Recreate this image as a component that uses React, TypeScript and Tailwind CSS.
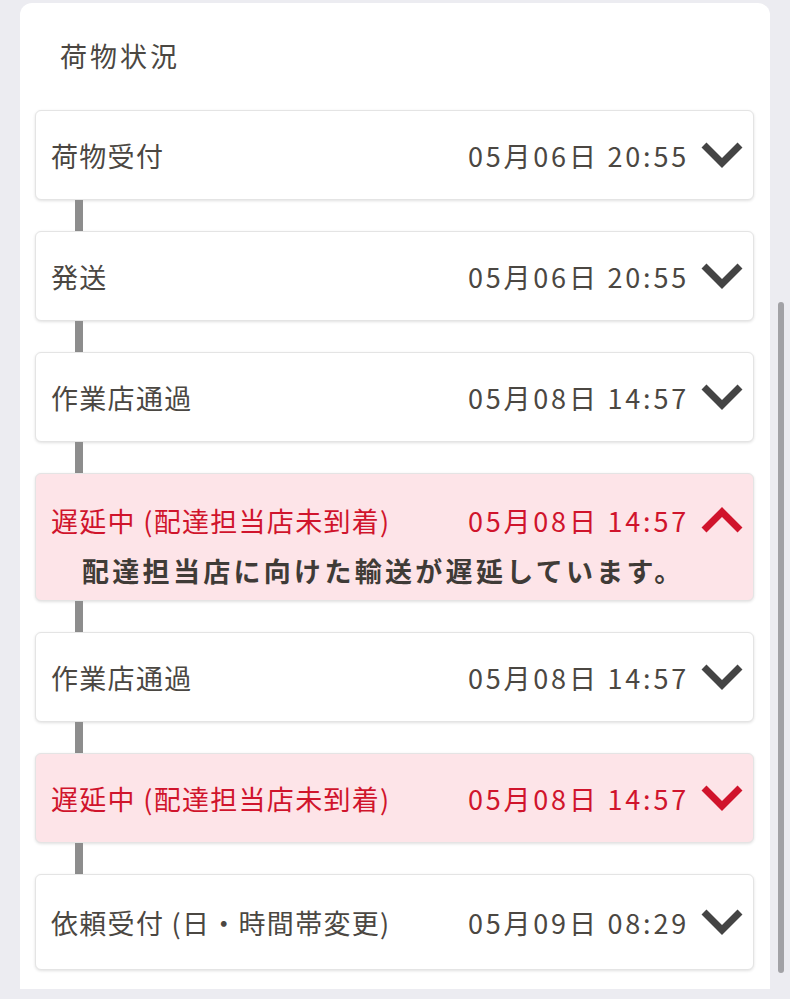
import React from 'react';

type Step = {
  label: string;
  date: string;
  delayed?: boolean;
  open?: boolean;
  detail?: string;
};

const steps: Step[] = [
  { label: '荷物受付', date: '05月06日 20:55' },
  { label: '発送', date: '05月06日 20:55' },
  { label: '作業店通過', date: '05月08日 14:57' },
  {
    label: '遅延中 (配達担当店未到着)',
    date: '05月08日 14:57',
    delayed: true,
    open: true,
    detail: '配達担当店に向けた輸送が遅延しています。',
  },
  { label: '作業店通過', date: '05月08日 14:57' },
  { label: '遅延中 (配達担当店未到着)', date: '05月08日 14:57', delayed: true },
  { label: '依頼受付 (日・時間帯変更)', date: '05月09日 08:29' },
];

function Chevron({ up, className }: { up?: boolean; className?: string }) {
  return (
    <svg viewBox="0 0 42 26" className={className} fill="none" stroke="currentColor" strokeWidth="7" strokeLinecap="butt" strokeLinejoin="miter">
      {up ? <path d="M3 23 L21 5 L39 23" /> : <path d="M3 3 L21 21 L39 3" />}
    </svg>
  );
}

export default function App() {
  return (
    <div
      className="relative h-[999px] w-[790px] overflow-hidden bg-[#ececf1] pt-[3px]"
      style={{ fontFamily: '"Noto Sans CJK JP", "Noto Sans", sans-serif' }}
    >
      <div className="ml-[20px] h-[986px] w-[750px] rounded-t-[12px] bg-white">
        {/* ── title ── */}
        <h2 className="pl-[40px] pt-[33px] text-[27px] leading-[40px] tracking-[3px] text-[#4b4742]">荷物状況</h2>

        {/* ── timeline ── */}
        <div className="mt-[34px] pl-[15px] pr-[16px]">
          {steps.map((s, i) => {
            const last = i === steps.length - 1;
            const tone = s.delayed ? 'text-[#d0142c]' : 'text-[#4b4742]';
            return (
              <div key={i}>
                {i > 0 && <div className="ml-[40px] h-[31px] w-[8px] bg-[#8d8d8d]" />}
                <div
                  className={
                    'rounded-[6px] border border-[#e4e4e4] shadow-[0_1px_3px_rgba(0,0,0,0.12)] ' +
                    (s.delayed ? 'bg-[#fde4e8]' : 'bg-white')
                  }
                >
                  {s.open ? (
                    <div className="pb-[10px] pt-[27px]">
                      <div className={'flex h-[38px] items-center justify-between pl-[15px] pr-[10px] ' + tone}>
                        <span className="text-[27px] leading-none tracking-[1.3px]">{s.label}</span>
                        <div className="flex items-center gap-[12px]">
                          <span className="text-[27px] leading-none tracking-[2.8px]">{s.date}</span>
                          <Chevron up className="h-[26px] w-[42px] text-[#d0142c]" />
                        </div>
                      </div>
                      <p className="mt-[13px] pl-[46px] text-[27px] font-bold leading-[38px] tracking-[3.3px] text-[#3f3b37]">
                        {s.detail}
                      </p>
                    </div>
                  ) : (
                    <div
                      className={
                        'flex items-center justify-between pl-[15px] pr-[10px] ' +
                        (last ? 'h-[94px] ' : 'h-[88px] ') +
                        tone
                      }
                    >
                      <span className="text-[27px] leading-none tracking-[1.3px]">{s.label}</span>
                      <div className="flex items-center gap-[12px]">
                        <span className="text-[27px] leading-none tracking-[2.8px]">{s.date}</span>
                        <Chevron
                          className={'h-[26px] w-[42px] ' + (s.delayed ? 'text-[#d0142c]' : 'text-[#444444]')}
                        />
                      </div>
                    </div>
                  )}
                </div>
              </div>
            );
          })}
        </div>
      </div>

      {/* ── scrollbar overlay ── */}
      <div className="absolute left-[778px] top-[302px] h-[671px] w-[6px] rounded-full bg-[#a2a2a6]" />
    </div>
  );
}
